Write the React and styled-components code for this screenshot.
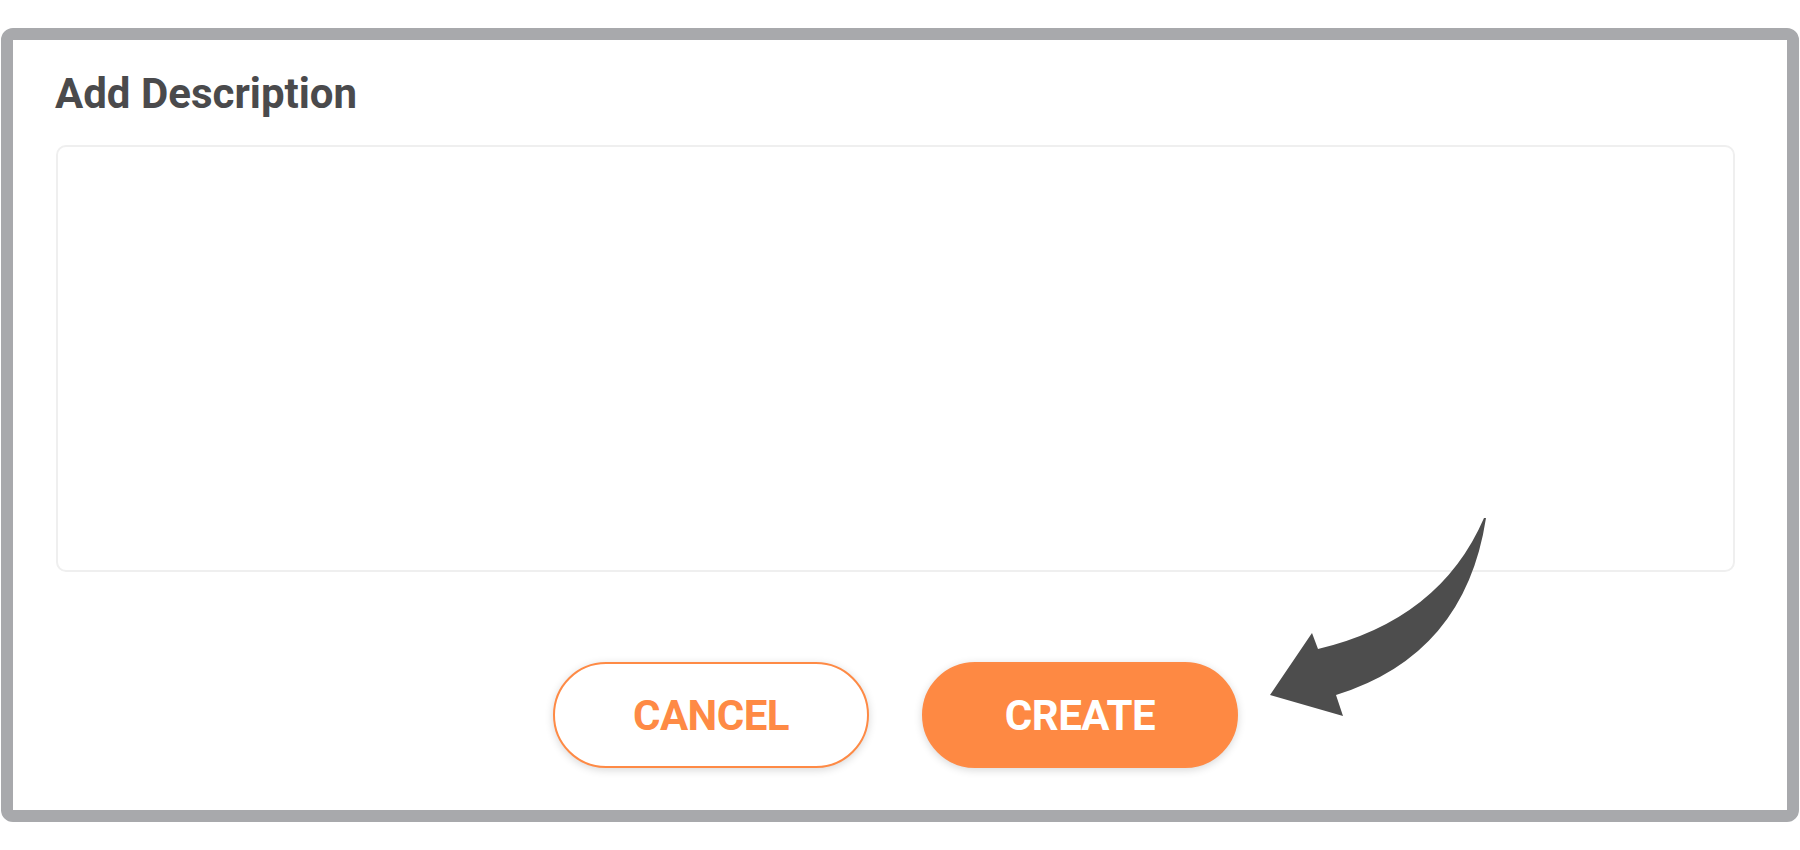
import React from 'react';
import styled, { createGlobalStyle } from 'styled-components';

const GlobalStyle = createGlobalStyle`
  html, body {
    margin: 0;
    padding: 0;
    background: #ffffff;
    font-family: Roboto, "Liberation Sans", sans-serif;
  }
`;

const Page = styled.div`
  position: relative;
  width: 1800px;
  height: 850px;
  padding-top: 28px;
  padding-left: 1px;
  box-sizing: border-box;
`;

const Frame = styled.div`
  width: 1798px;
  height: 794px;
  box-sizing: border-box;
  border: 12px solid #a8a9ac;
  border-radius: 12px;
  background: #fff;
  padding: 29px 52px 42px 43px;
  display: flex;
  flex-direction: column;
`;

const Title = styled.h2`
  margin: 0;
  font-size: 42px;
  font-weight: 700;
  color: #4a4a4c;
  line-height: 49px;
  margin-left: -1px;
`;

const Description = styled.textarea`
  margin-top: 27px;
  height: 427px;
  width: 100%;
  box-sizing: border-box;
  border: 2px solid #efefef;
  border-radius: 10px;
  resize: none;
  outline: none;
  font-family: inherit;
  font-size: 24px;
  padding: 16px;
`;

const Actions = styled.div`
  margin-top: auto;
  display: flex;
  justify-content: center;
  gap: 53px;
`;

const Button = styled.button`
  width: 316px;
  height: 106px;
  box-sizing: border-box;
  border-radius: 53px;
  font-family: Roboto, "Liberation Sans", sans-serif;
  font-size: 42px;
  font-weight: 700;
  letter-spacing: -0.5px;
  cursor: pointer;
  box-shadow: 0 2px 8px rgba(0, 0, 0, 0.16);
  border: 2px solid #fe8a45;
  background: ${p => (p.$primary ? '#fe8943' : '#ffffff')};
  color: ${p => (p.$primary ? '#ffffff' : '#fe8a45')};
`;

const Arrow = styled.svg`
  position: absolute;
  left: 1260px;
  top: 510px;
  width: 240px;
  height: 220px;
  pointer-events: none;
`;

export default function App() {
  return (
    <>
      <GlobalStyle />
      <Page>
        <Frame>
          <Title>Add Description</Title>
          <Description />
          <Actions>
            <Button>CANCEL</Button>
            <Button $primary>CREATE</Button>
          </Actions>
        </Frame>
        <Arrow viewBox="1260 510 240 220">
          <path
            d="M1484,518 Q1440,620 1318,649 L1312,633 L1270,695 L1343,716 L1336,695 Q1465,655 1486,518 Z"
            fill="#4d4d4d"
          />
        </Arrow>
      </Page>
    </>
  );
}
